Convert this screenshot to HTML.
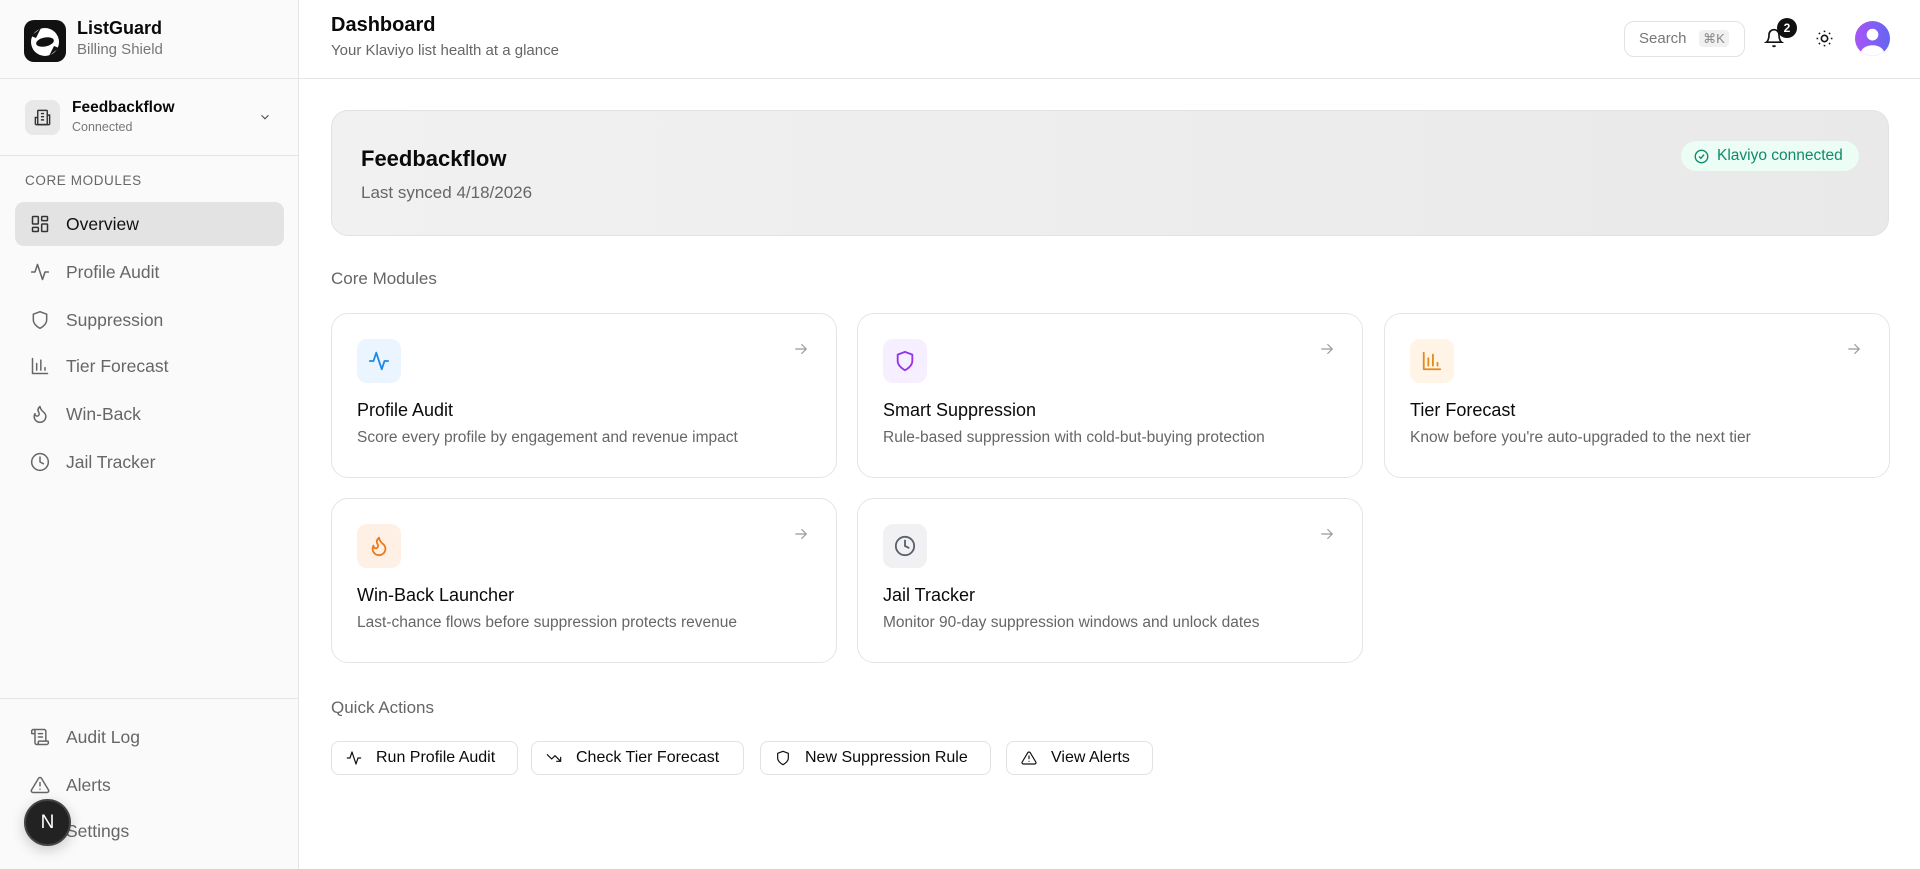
<!DOCTYPE html>
<html><head><meta charset="utf-8"><style>
*{box-sizing:border-box;margin:0;padding:0}
body{width:1920px;height:869px;overflow:hidden;font-family:"Liberation Sans",sans-serif;background:#fff;color:#0a0a0a;position:relative}
.a{position:absolute}
.side{left:0;top:0;width:299px;height:869px;background:#fafafa;border-right:1px solid #e5e5e5}
.nav{position:absolute;left:15px;width:269px;height:44px;border-radius:9px;display:flex;align-items:center;padding-left:15px;font-size:17.5px;color:#666}
.nav svg{width:20px;height:20px;margin-right:16px;fill:none;stroke:#666;stroke-width:1.8;stroke-linecap:round;stroke-linejoin:round}
.card{position:absolute;width:506px;height:165px;border:1px solid #e5e5e5;border-radius:17px;background:#fff}
.ib{position:absolute;left:25px;top:25px;width:44px;height:44px;border-radius:10px;display:flex;align-items:center;justify-content:center}
.ib svg{width:22px;height:22px;fill:none;stroke-width:2;stroke-linecap:round;stroke-linejoin:round}
.ct{position:absolute;left:25px;top:86px;font-size:18px;font-weight:500}
.cd{position:absolute;left:25px;top:115px;font-size:15.5px;color:#666}
.ar{position:absolute;right:26px;top:26px;width:18px;height:18px;fill:none;stroke:#999;stroke-width:1.6;stroke-linecap:round;stroke-linejoin:round}
.btn{position:absolute;top:741px;height:34px;border:1px solid #e2e2e2;border-radius:8px;display:flex;align-items:center;padding-left:14px;font-size:16px;font-weight:500}
.btn svg{width:16px;height:16px;margin-right:14px;fill:none;stroke:#111;stroke-width:1.8;stroke-linecap:round;stroke-linejoin:round}
</style></head><body>
<div class="a side">
  <svg class="a" style="left:24px;top:20px" width="42" height="42" viewBox="0 0 42 42"><rect width="42" height="42" rx="10" fill="#111"/><circle cx="21" cy="22" r="14" fill="#fff"/><path d="M7 16 L17 8 L12 18Z M35 28 L25 36 L30 26Z" fill="#111"/><ellipse cx="21" cy="22" rx="9" ry="4.5" transform="rotate(-12 21 22)" fill="#111"/></svg>
  <div class="a" style="left:77px;top:18px;font-size:18px;font-weight:700">ListGuard</div>
  <div class="a" style="left:77px;top:41px;font-size:15px;color:#777">Billing Shield</div>
  <div class="a" style="left:0;top:78px;width:299px;border-top:1px solid #e5e5e5"></div>
  <div class="a" style="left:25px;top:100px;width:35px;height:35px;border-radius:8px;background:#e8e8e8"></div>
  <svg class="a" style="left:33px;top:108px" width="19" height="19" viewBox="0 0 24 24" fill="none" stroke="#333" stroke-width="1.8"><rect x="6" y="3" width="12" height="18" rx="1"/><path d="M3 21h18M6 12H3v9M18 9h3v12M10 7h4M10 11h4M10 15h4"/></svg>
  <div class="a" style="left:72px;top:99px;font-size:15.5px;font-weight:600">Feedbackflow</div>
  <div class="a" style="left:72px;top:120px;font-size:12.5px;color:#777">Connected</div>
  <svg class="a" style="left:258px;top:110px" width="14" height="14" viewBox="0 0 24 24" fill="none" stroke="#555" stroke-width="2"><path d="M6 9l6 6 6-6"/></svg>
  <div class="a" style="left:0;top:155px;width:299px;border-top:1px solid #e5e5e5"></div>
  <div class="a" style="left:25px;top:173px;font-size:13.5px;color:#666;letter-spacing:.6px">CORE MODULES</div>
  <div class="nav" style="top:202px;background:#e3e3e3;color:#111"><svg viewBox="0 0 24 24" style="stroke:#333"><rect x="3" y="3" width="7" height="9" rx="1"/><rect x="14" y="3" width="7" height="5" rx="1"/><rect x="14" y="12" width="7" height="9" rx="1"/><rect x="3" y="16" width="7" height="5" rx="1"/></svg>Overview</div>
  <div class="nav" style="top:250px"><svg viewBox="0 0 24 24"><path d="M22 12h-4l-3 9L9 3l-3 9H2"/></svg>Profile Audit</div>
  <div class="nav" style="top:298px"><svg viewBox="0 0 24 24"><path d="M12 22s8-4 8-10V5l-8-3-8 3v7c0 6 8 10 8 10z"/></svg>Suppression</div>
  <div class="nav" style="top:344px"><svg viewBox="0 0 24 24"><path d="M3 3v18h18M8 17V9M13 17V5M18 17v-3"/></svg>Tier Forecast</div>
  <div class="nav" style="top:392px"><svg viewBox="0 0 24 24"><path d="M8.5 14.5A2.5 2.5 0 0 0 11 12c0-1.4-.5-2-1-3-1-2.1-.2-4.1 2-6 .5 2.5 2 4.9 4 6.5 2 1.6 3 3.5 3 5.5a7 7 0 1 1-14 0c0-1.2.4-2.3 1-3.4a2.5 2.5 0 0 0 2.5 2.9z"/></svg>Win-Back</div>
  <div class="nav" style="top:440px"><svg viewBox="0 0 24 24"><circle cx="12" cy="12" r="10"/><path d="M12 6v6l4 2"/></svg>Jail Tracker</div>
  <div class="a" style="left:0;top:698px;width:299px;border-top:1px solid #e5e5e5"></div>
  <div class="nav" style="top:715px"><svg viewBox="0 0 24 24"><path d="M15 12h-5M15 8h-5M19 17V5a2 2 0 0 0-2-2H4M8 21h12a2 2 0 0 0 2-2v-1a1 1 0 0 0-1-1H11a1 1 0 0 0-1 1v1a2 2 0 1 1-4 0V5a2 2 0 1 0-4 0v2a1 1 0 0 0 1 1h3"/></svg>Audit Log</div>
  <div class="nav" style="top:763px"><svg viewBox="0 0 24 24"><path d="M10.3 3.9L1.8 18a2 2 0 0 0 1.7 3h17a2 2 0 0 0 1.7-3L13.7 3.9a2 2 0 0 0-3.4 0zM12 9v4M12 17h.01"/></svg>Alerts</div>
  <div class="nav" style="top:809px"><svg viewBox="0 0 24 24"><circle cx="12" cy="12" r="3"/></svg>Settings</div>
  <div class="a" style="left:24px;top:799px;width:47px;height:47px;border-radius:50%;background:#222;border:2px solid #444;color:#fff;font-size:19px;display:flex;align-items:center;justify-content:center;box-shadow:0 4px 14px rgba(0,0,0,.2)">N</div>
</div>
<div class="a" style="left:299px;top:78px;width:1621px;border-top:1px solid #e5e5e5"></div>
<div class="a" style="left:331px;top:14px;font-size:20px;font-weight:600">Dashboard</div>
<div class="a" style="left:331px;top:42px;font-size:15px;color:#666">Your Klaviyo list health at a glance</div>
<div class="a" style="left:1624px;top:21px;width:121px;height:36px;border:1px solid #e2e2e2;border-radius:10px"></div>
<div class="a" style="left:1639px;top:30px;font-size:15px;color:#777">Search</div>
<div class="a" style="left:1699px;top:30px;width:30px;height:17px;background:#f0f0f0;border-radius:4px;font-size:13px;color:#888;text-align:center;line-height:17px">⌘K</div>
<svg class="a" style="left:1764px;top:28px" width="20" height="20" viewBox="0 0 24 24" fill="none" stroke="#111" stroke-width="2"><path d="M6 8a6 6 0 0 1 12 0c0 7 3 9 3 9H3s3-2 3-9M10.3 21a1.9 1.9 0 0 0 3.4 0"/></svg>
<div class="a" style="left:1777px;top:18px;width:20px;height:20px;border-radius:50%;background:#111;color:#fff;font-size:12px;font-weight:700;text-align:center;line-height:20px">2</div>
<svg class="a" style="left:1815px;top:29px" width="19" height="19" viewBox="0 0 24 24" fill="none" stroke="#111" stroke-width="2"><circle cx="12" cy="12" r="4"/><path d="M12 2v2M12 20v2M4.9 4.9l1.4 1.4M17.7 17.7l1.4 1.4M2 12h2M20 12h2M4.9 19.1l1.4-1.4M17.7 6.3l1.4-1.4"/></svg>
<svg class="a" style="left:1855px;top:21px" width="35" height="35" viewBox="0 0 36 36"><defs><linearGradient id="g" x1="0" y1="0" x2="1" y2="0"><stop offset="0" stop-color="#a855f7"/><stop offset="1" stop-color="#6366f1"/></linearGradient><clipPath id="c"><circle cx="18" cy="18" r="18"/></clipPath></defs><circle cx="18" cy="18" r="18" fill="url(#g)"/><g clip-path="url(#c)" fill="#fff"><circle cx="18" cy="14" r="6"/><ellipse cx="18" cy="33" rx="12" ry="8"/></g></svg>

<div class="a" style="left:331px;top:110px;width:1558px;height:126px;border-radius:17px;border:1px solid #e2e2e2;background:linear-gradient(90deg,#f1f1f1,#e9e9e9)"></div>
<div class="a" style="left:361px;top:146px;font-size:22px;font-weight:600">Feedbackflow</div>
<div class="a" style="left:361px;top:183px;font-size:17px;color:#666">Last synced 4/18/2026</div>
<div class="a" style="left:1681px;top:141px;width:178px;height:30px;border-radius:15px;background:#ecfdf5;display:flex;align-items:center;padding-left:13px;font-size:15.5px;color:#0f8a6a"><svg width="15" height="15" viewBox="0 0 24 24" fill="none" stroke="#0f8a6a" stroke-width="2.2" style="margin-right:8px"><circle cx="12" cy="12" r="10"/><path d="M8 12l3 3 5-6"/></svg>Klaviyo connected</div>

<div class="a" style="left:331px;top:269px;font-size:17px;color:#666">Core Modules</div>

<div class="card" style="left:331px;top:313px"><div class="ib" style="background:#eaf5ff"><svg viewBox="0 0 24 24" stroke="#1e88e5"><path d="M22 12h-4l-3 9L9 3l-3 9H2"/></svg></div><svg class="ar" viewBox="0 0 24 24"><path d="M5 12h14M13 6l6 6-6 6"/></svg><div class="ct">Profile Audit</div><div class="cd">Score every profile by engagement and revenue impact</div></div>
<div class="card" style="left:857px;top:313px"><div class="ib" style="background:#f6efff"><svg viewBox="0 0 24 24" stroke="#9333ea"><path d="M12 22s8-4 8-10V5l-8-3-8 3v7c0 6 8 10 8 10z"/></svg></div><svg class="ar" viewBox="0 0 24 24"><path d="M5 12h14M13 6l6 6-6 6"/></svg><div class="ct">Smart Suppression</div><div class="cd">Rule-based suppression with cold-but-buying protection</div></div>
<div class="card" style="left:1384px;top:313px"><div class="ib" style="background:#fff4e6"><svg viewBox="0 0 24 24" stroke="#e8891c"><path d="M3 3v18h18M8 17V9M13 17V5M18 17v-3"/></svg></div><svg class="ar" viewBox="0 0 24 24"><path d="M5 12h14M13 6l6 6-6 6"/></svg><div class="ct">Tier Forecast</div><div class="cd">Know before you're auto-upgraded to the next tier</div></div>
<div class="card" style="left:331px;top:498px"><div class="ib" style="background:#fff0e6"><svg viewBox="0 0 24 24" stroke="#ea7a1a"><path d="M8.5 14.5A2.5 2.5 0 0 0 11 12c0-1.4-.5-2-1-3-1-2.1-.2-4.1 2-6 .5 2.5 2 4.9 4 6.5 2 1.6 3 3.5 3 5.5a7 7 0 1 1-14 0c0-1.2.4-2.3 1-3.4a2.5 2.5 0 0 0 2.5 2.9z"/></svg></div><svg class="ar" viewBox="0 0 24 24"><path d="M5 12h14M13 6l6 6-6 6"/></svg><div class="ct">Win-Back Launcher</div><div class="cd">Last-chance flows before suppression protects revenue</div></div>
<div class="card" style="left:857px;top:498px"><div class="ib" style="background:#f1f1f3"><svg viewBox="0 0 24 24" stroke="#5b6070"><circle cx="12" cy="12" r="10"/><path d="M12 6v6l4 2"/></svg></div><svg class="ar" viewBox="0 0 24 24"><path d="M5 12h14M13 6l6 6-6 6"/></svg><div class="ct">Jail Tracker</div><div class="cd">Monitor 90-day suppression windows and unlock dates</div></div>

<div class="a" style="left:331px;top:698px;font-size:17px;color:#666">Quick Actions</div>
<div class="btn" style="left:331px;width:187px"><svg viewBox="0 0 24 24"><path d="M22 12h-4l-3 9L9 3l-3 9H2"/></svg>Run Profile Audit</div>
<div class="btn" style="left:531px;width:213px"><svg viewBox="0 0 24 24"><path d="M22 17l-8.5-8.5-5 5L2 7M16 17h6v-6"/></svg>Check Tier Forecast</div>
<div class="btn" style="left:760px;width:231px"><svg viewBox="0 0 24 24"><path d="M12 22s8-4 8-10V5l-8-3-8 3v7c0 6 8 10 8 10z"/></svg>New Suppression Rule</div>
<div class="btn" style="left:1006px;width:147px"><svg viewBox="0 0 24 24"><path d="M10.3 3.9L1.8 18a2 2 0 0 0 1.7 3h17a2 2 0 0 0 1.7-3L13.7 3.9a2 2 0 0 0-3.4 0zM12 9v4M12 17h.01"/></svg>View Alerts</div>
</body></html>
